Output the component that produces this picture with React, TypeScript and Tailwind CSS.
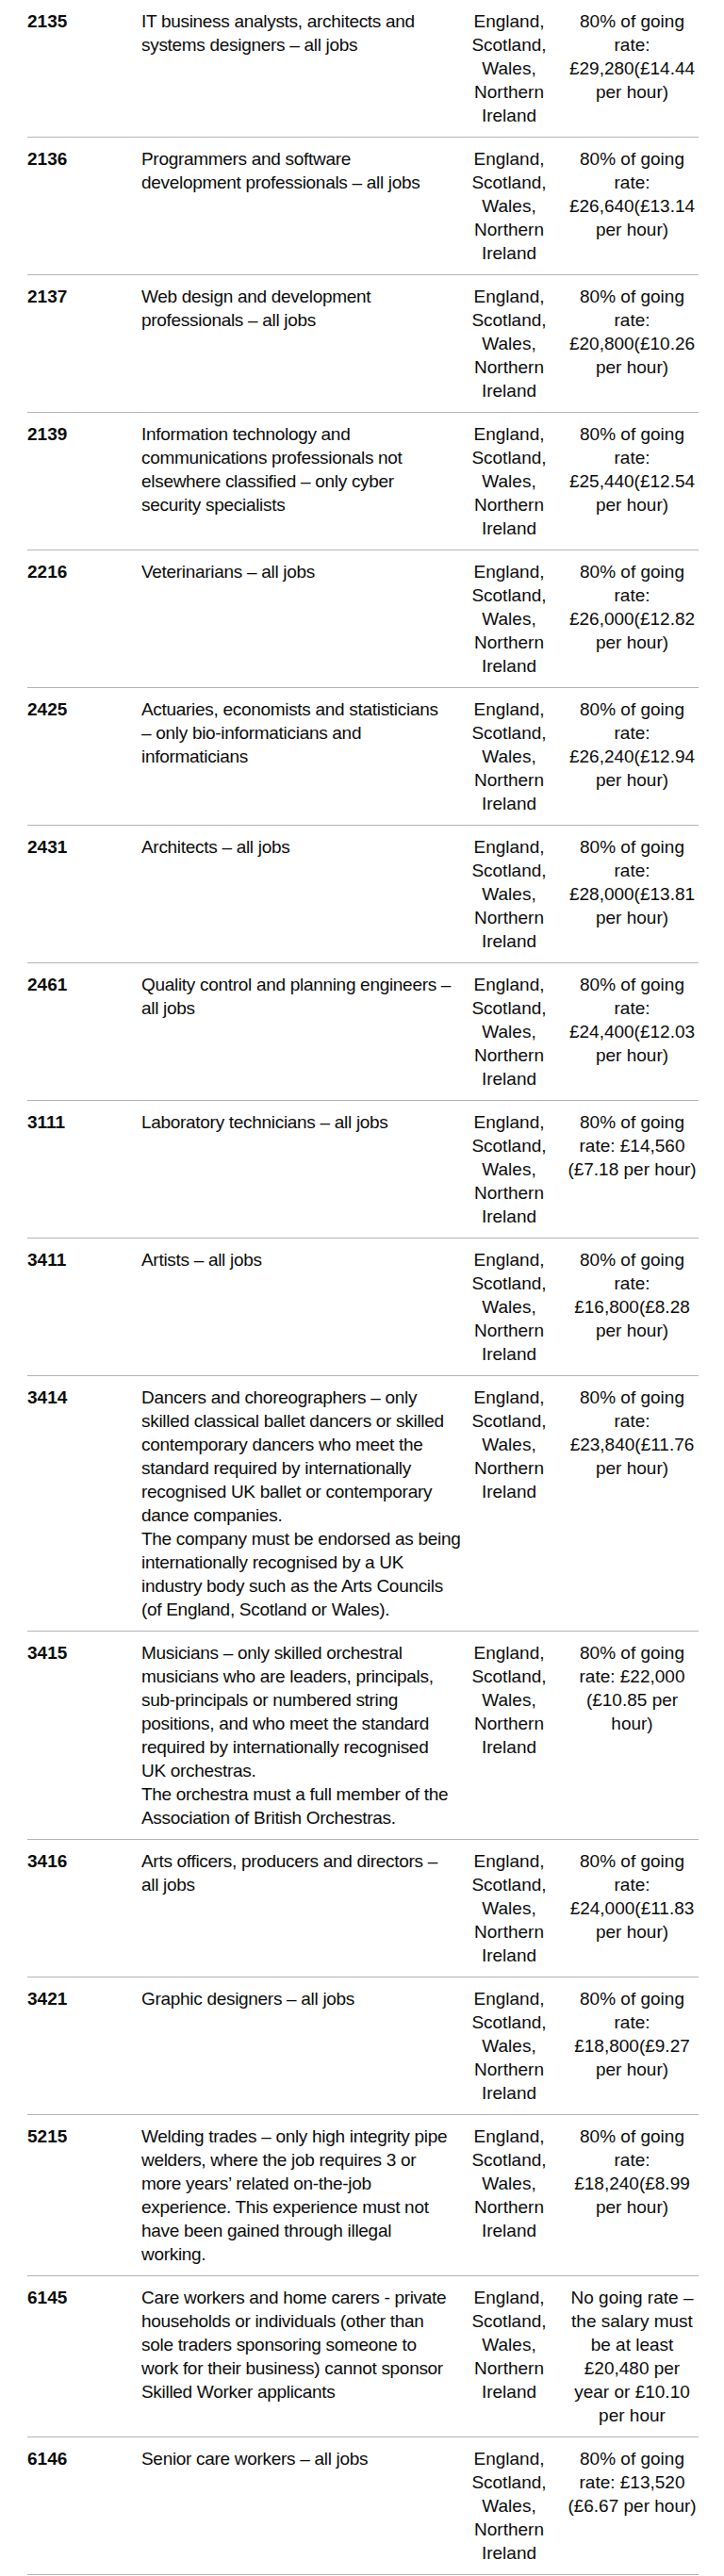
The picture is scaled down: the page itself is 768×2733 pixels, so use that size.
import React from 'react';

type Row = {
  code: string;
  title: string[];
  rate: string;
};

const where = 'England, Scotland, Wales, Northern Ireland';

// description lines are kept as the source page breaks them
const rows: Row[] = [
  { code: '2135', title: ['IT business analysts, architects and', 'systems designers – all jobs'], rate: '80% of going rate: £29,280(£14.44 per hour)' },
  { code: '2136', title: ['Programmers and software', 'development professionals – all jobs'], rate: '80% of going rate: £26,640(£13.14 per hour)' },
  { code: '2137', title: ['Web design and development', 'professionals – all jobs'], rate: '80% of going rate: £20,800(£10.26 per hour)' },
  {
    code: '2139',
    title: ['Information technology and', 'communications professionals not', 'elsewhere classified – only cyber', 'security specialists'],
    rate: '80% of going rate: £25,440(£12.54 per hour)',
  },
  { code: '2216', title: ['Veterinarians – all jobs'], rate: '80% of going rate: £26,000(£12.82 per hour)' },
  {
    code: '2425',
    title: ['Actuaries, economists and statisticians', '– only bio-informaticians and', 'informaticians'],
    rate: '80% of going rate: £26,240(£12.94 per hour)',
  },
  { code: '2431', title: ['Architects – all jobs'], rate: '80% of going rate: £28,000(£13.81 per hour)' },
  { code: '2461', title: ['Quality control and planning engineers –', 'all jobs'], rate: '80% of going rate: £24,400(£12.03 per hour)' },
  { code: '3111', title: ['Laboratory technicians – all jobs'], rate: '80% of going rate: £14,560 (£7.18 per hour)' },
  { code: '3411', title: ['Artists – all jobs'], rate: '80% of going rate: £16,800(£8.28 per hour)' },
  {
    code: '3414',
    title: [
      'Dancers and choreographers – only',
      'skilled classical ballet dancers or skilled',
      'contemporary dancers who meet the',
      'standard required by internationally',
      'recognised UK ballet or contemporary',
      'dance companies.',
      'The company must be endorsed as being',
      'internationally recognised by a UK',
      'industry body such as the Arts Councils',
      '(of England, Scotland or Wales).',
    ],
    rate: '80% of going rate: £23,840(£11.76 per hour)',
  },
  {
    code: '3415',
    title: [
      'Musicians – only skilled orchestral',
      'musicians who are leaders, principals,',
      'sub-principals or numbered string',
      'positions, and who meet the standard',
      'required by internationally recognised',
      'UK orchestras.',
      'The orchestra must a full member of the',
      'Association of British Orchestras.',
    ],
    rate: '80% of going rate: £22,000 (£10.85 per hour)',
  },
  { code: '3416', title: ['Arts officers, producers and directors –', 'all jobs'], rate: '80% of going rate: £24,000(£11.83 per hour)' },
  { code: '3421', title: ['Graphic designers – all jobs'], rate: '80% of going rate: £18,800(£9.27 per hour)' },
  {
    code: '5215',
    title: [
      'Welding trades – only high integrity pipe',
      'welders, where the job requires 3 or',
      'more years’ related on-the-job',
      'experience. This experience must not',
      'have been gained through illegal',
      'working.',
    ],
    rate: '80% of going rate: £18,240(£8.99 per hour)',
  },
  {
    code: '6145',
    title: [
      'Care workers and home carers - private',
      'households or individuals (other than',
      'sole traders sponsoring someone to',
      'work for their business) cannot sponsor',
      'Skilled Worker applicants',
    ],
    rate: 'No going rate – the salary must be at least £20,480 per year or £10.10 per hour',
  },
  { code: '6146', title: ['Senior care workers – all jobs'], rate: '80% of going rate: £13,520 (£6.67 per hour)' },
];

export default function App() {
  return (
    <div className="bg-white min-h-[2733px] font-['Liberation_Sans',Arial,sans-serif] text-[19px] leading-[25px] text-[#0b0c0c]">
      <div className="ml-[29px] w-[712px]">
        {rows.map((row) => (
          <div
            key={row.code}
            className="grid grid-cols-[101px_330px_80px_141px] gap-x-5 py-2.5 border-b border-[#b1b4b6]"
          >
            <div className="font-bold">{row.code}</div>
            <div className="tracking-[-0.3px]">
              {row.title.map((line, i) => (
                <div key={i} className="whitespace-nowrap">
                  {line}
                </div>
              ))}
            </div>
            <div className="text-center">{where}</div>
            <div className="text-center">{row.rate}</div>
          </div>
        ))}
      </div>
    </div>
  );
}
